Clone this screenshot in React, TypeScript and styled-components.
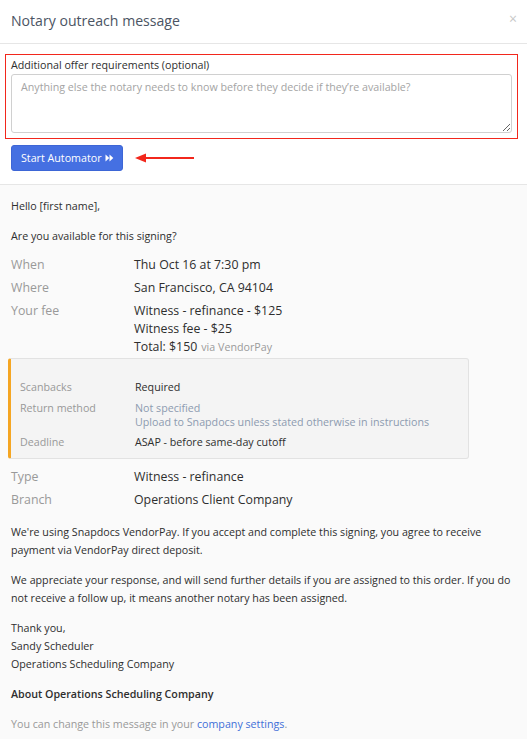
import React from "react";
import styled, { createGlobalStyle } from "styled-components";

const Global = createGlobalStyle`
  html, body { margin: 0; padding: 0; background: #fafafa; }
  body { font-family: "Open Sans", "Liberation Sans", sans-serif; color: #333; -webkit-font-smoothing: antialiased; }
  * { box-sizing: border-box; }
`;

const Modal = styled.div`
  width: 527px;
  min-height: 739px;
  background: #fafafa;
`;

const Header = styled.div`
  height: 44px;
  display: flex;
  align-items: center;
  justify-content: space-between;
  padding: 0 10px 3px 11px;
  background: #fff;
  border-bottom: 1px solid #e6e6e6;
`;

const Title = styled.h1`
  margin: 0;
  font-size: 14.1px;
  font-weight: 400;
  color: #4b5463;
`;

const Close = styled.span`
  font-size: 14px;
  color: #c8c8c8;
  line-height: 1;
  margin-top: -3px;
`;

const FormArea = styled.div`
  background: #fff;
  padding: 10px 9px 13px 5px;
  border-bottom: 1px solid #e6e6e6;
`;

const Highlight = styled.div`
  border: 1.5px solid #f2271c;
  padding: 3px 5px 5px 5px;
`;

const Label = styled.label`
  display: block;
  font-size: 10.7px;
  color: #2e2e2e;
  line-height: 14px;
  margin-bottom: 2px;
`;

const TextArea = styled.textarea`
  display: block;
  width: 100%;
  height: 59px;
  border: 1px solid #d0d0d0;
  border-radius: 3px;
  padding: 4px 9px;
  font-family: inherit;
  font-size: 10.7px;
  line-height: 17px;
  color: #333;
  resize: vertical;
  &::placeholder { color: #a4a4a4; }
`;

const ActionRow = styled.div`
  display: flex;
  align-items: center;
  gap: 12px;
  margin-top: 6px;
  padding-left: 6px;
`;

const PrimaryButton = styled.button`
  height: 26px;
  padding: 0 8px 0 9px;
  background: #4570e2;
  border: 1px solid #3d66d6;
  border-radius: 3px;
  color: #fff;
  font-family: inherit;
  font-size: 10.7px;
  display: flex;
  align-items: center;
  gap: 3px;
`;

const Body = styled.div`
  padding: 12px 11px 20px 11px;
  font-size: 10.7px;
  line-height: 18px;
  color: #2e2e2e;
`;

const Para = styled.p<{ $gap?: number }>`
  margin: 0 0 ${(p) => p.$gap ?? 12}px 0;
`;

const DetailGrid = styled.div<{ $large?: boolean; $label: number; $after?: number }>`
  display: grid;
  grid-template-columns: ${(p) => p.$label}px 1fr;
  row-gap: 5px;
  font-size: ${(p) => (p.$large ? 12.35 : 10.7)}px;
  line-height: ${(p) => (p.$large ? 18 : 16)}px;
  margin-bottom: ${(p) => p.$after ?? 0}px;
`;

const Key = styled.div`
  color: #999;
`;

const Val = styled.div<{ $muted?: boolean }>`
  color: ${(p) => (p.$muted ? "#8d9bb0" : "#2e2e2e")};
`;

const SubLine = styled.div`
  line-height: 13px;
`;

const Via = styled.span`
  color: #9a9a9a;
  font-size: 10.7px;
  margin-left: 4px;
`;

const Notice = styled.div`
  margin: 2px 0 9px -3px;
  width: 461px;
  background: #f4f4f4;
  border: 1px solid #e2e2e2;
  border-left: 3px solid #f5a623;
  border-radius: 3px;
  padding: 20px 10px 8px 9px;
`;

const Bold = styled.p`
  margin: 0 0 12px 0;
  font-weight: 600;
`;

const Footnote = styled.p`
  margin: 0;
  color: #999;
`;

const Link = styled.a`
  color: #3f6fd8;
  text-decoration: none;
`;

const FastForward = () => (
  <svg width="9" height="8" viewBox="0 0 9 8">
    <path d="M0.5 0.5 L4.3 4 L0.5 7.5 Z M4.5 0.5 L8.3 4 L4.5 7.5 Z" fill="#fff" />
  </svg>
);

const Arrow = () => (
  <svg width="60" height="12" viewBox="0 0 60 12">
    <line x1="8" y1="6" x2="59" y2="6" stroke="#f2271c" strokeWidth="2" />
    <path d="M0 6 L11 1.5 L11 10.5 Z" fill="#f2271c" />
  </svg>
);

export default function App() {
  return (
    <>
      <Global />
      <Modal>
        <Header>
          <Title>Notary outreach message</Title>
          <Close>×</Close>
        </Header>
        <FormArea>
          <Highlight>
            <Label>Additional offer requirements (optional)</Label>
            <TextArea placeholder="Anything else the notary needs to know before they decide if they’re available?" />
          </Highlight>
          <ActionRow>
            <PrimaryButton>
              Start Automator <FastForward />
            </PrimaryButton>
            <Arrow />
          </ActionRow>
        </FormArea>
        <Body>
          <Para>Hello [first name],</Para>
          <Para $gap={11}>Are you available for this signing?</Para>
          <DetailGrid $large $label={123}>
            <Key>When</Key>
            <Val>Thu Oct 16 at 7:30 pm</Val>
            <Key>Where</Key>
            <Val>San Francisco, CA 94104</Val>
            <Key>Your fee</Key>
            <Val>
              Witness - refinance - $125
              <br />
              Witness fee - $25
              <br />
              Total: $150<Via>via VendorPay</Via>
            </Val>
          </DetailGrid>
          <Notice>
            <DetailGrid $label={115}>
              <Key>Scanbacks</Key>
              <Val>Required</Val>
              <Key>Return method</Key>
              <Val $muted>
                Not specified
                <SubLine>Upload to Snapdocs unless stated otherwise in instructions</SubLine>
              </Val>
              <Key>Deadline</Key>
              <Val>ASAP - before same-day cutoff</Val>
            </DetailGrid>
          </Notice>
          <DetailGrid $large $label={123} $after={14}>
            <Key>Type</Key>
            <Val>Witness - refinance</Val>
            <Key>Branch</Key>
            <Val>Operations Client Company</Val>
          </DetailGrid>
          <Para>
            We're using Snapdocs VendorPay. If you accept and complete this signing, you agree to receive payment via
            VendorPay direct deposit.
          </Para>
          <Para>
            We appreciate your response, and will send further details if you are assigned to this order. If you do
            not receive a follow up, it means another notary has been assigned.
          </Para>
          <Para>
            Thank you,
            <br />
            Sandy Scheduler
            <br />
            Operations Scheduling Company
          </Para>
          <Bold>About Operations Scheduling Company</Bold>
          <Footnote>
            You can change this message in your <Link href="#">company settings</Link>.
          </Footnote>
        </Body>
      </Modal>
    </>
  );
}
